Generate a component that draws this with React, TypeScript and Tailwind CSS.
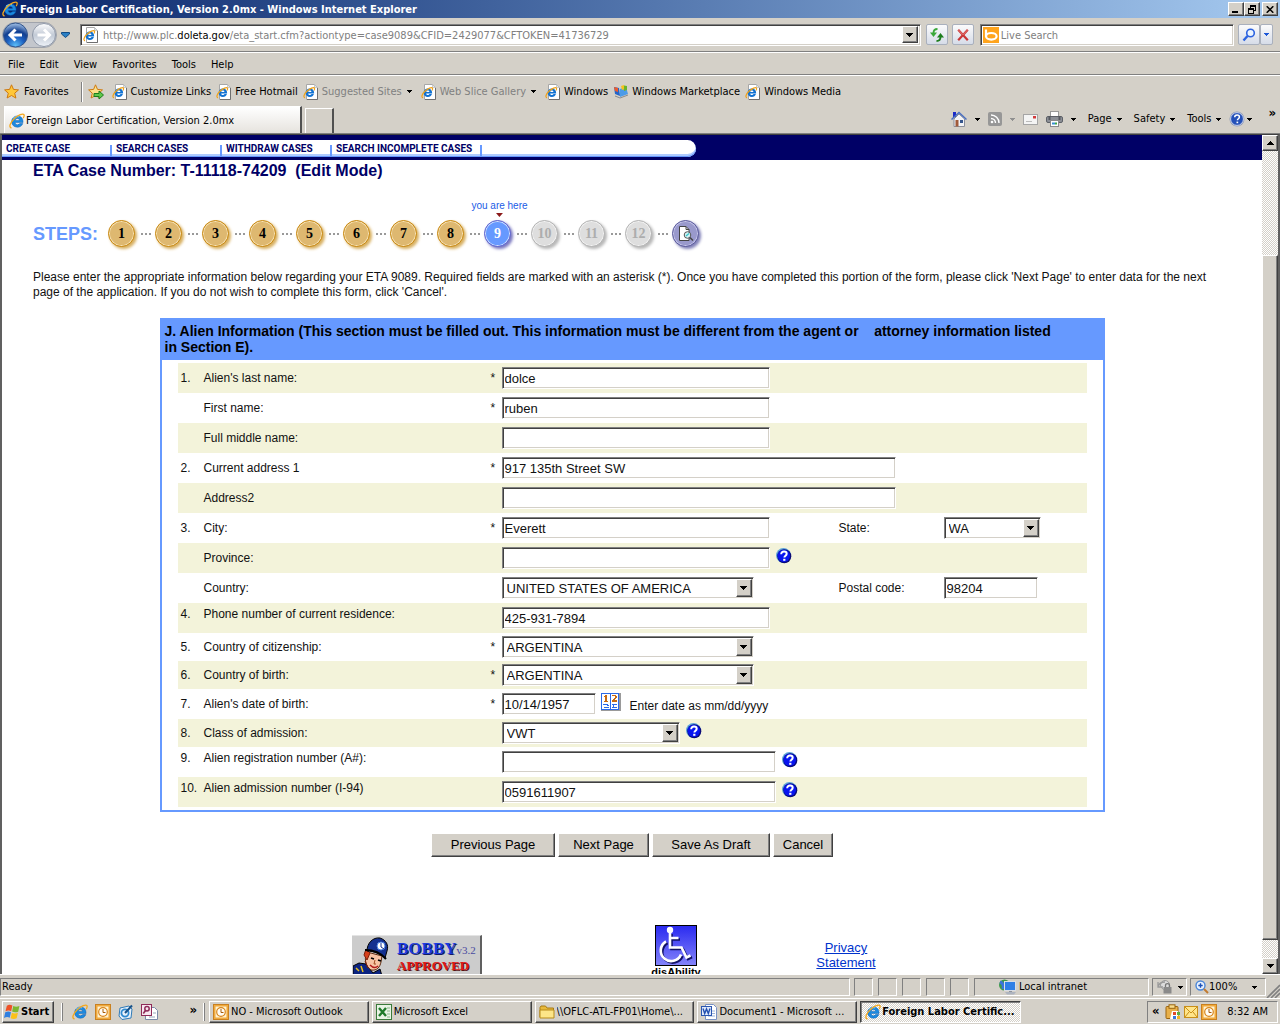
import React from "react";

const RAISED =
  "bg-[#d4d0c8] border border-t-white border-l-white border-b-[#404040] border-r-[#404040] shadow-[inset_-1px_-1px_#808080]";
const SUNKEN =
  "bg-white border border-t-[#808080] border-l-[#808080] border-b-white border-r-white shadow-[inset_1px_1px_#404040,inset_-1px_-1px_#d4d0c8]";
const PANEL = "border border-t-[#808080] border-l-[#808080] border-b-white border-r-white";
const DITHER = "bg-[repeating-conic-gradient(#ffffff_0_25%,#d4d0c8_0_50%)] bg-[length:2px_2px]";

function Arrow({ color = "#000", className = "" }: { color?: string; className?: string }) {
  return (
    <svg className={"shrink-0 " + className} width="7" height="4" viewBox="0 0 7 4" shapeRendering="crispEdges" aria-hidden="true">
      <path d="M0 0h7v1h-1v1h-1v1h-1v1h-1v-1h-1v-1h-1v-1h-1z" fill={color} />
    </svg>
  );
}

function SmallArrow({ color = "#000" }: { color?: string }) {
  return (
    <svg className="shrink-0" width="5" height="3" viewBox="0 0 5 3" shapeRendering="crispEdges" aria-hidden="true">
      <path d="M0 0h5v1h-1v1h-1v1h-1v-1h-1v-1h-1z" fill={color} />
    </svg>
  );
}

function ELogo({ size = 16 }: { size?: number }) {
  return (
    <svg className="shrink-0" width={size} height={size} viewBox="0 0 16 16" aria-hidden="true">
      <path d="M13.8 10.6C12.9 13 10.9 14.2 8.4 14.2 5 14.2 2.7 11.9 2.7 8.6S5 3 8.4 3c3.4 0 5.6 2.2 5.6 5.5v1.1H6.2c.1 1.4 1 2.2 2.3 2.2 1 0 1.7-.4 2.1-1.2zM6.3 7.4h4.2C10.4 6.2 9.6 5.500 8.400 5.500S6.500 6.200 6.300 7.400z" fill="#1b8ae0" stroke="#0c5fb4" strokeWidth=".5" />
      <path d="M4 5.200C5.500 3.800 8 3.300 10 3.900" stroke="#7fd0ff" strokeWidth="1" fill="none" />
      <path d="M2.600 14.800C-.6 14.600 1 9.800 5.200 5.800 9.300 1.900 14 .2 14.900 1.700c.5.800.1 2.200-.7 3.500" fill="none" stroke="#f5a81c" strokeWidth="1.300" />
    </svg>
  );
}

function PageIcon() {
  return (
    <svg className="shrink-0" width="16" height="16" viewBox="0 0 16 16" aria-hidden="true">
      <path d="M3.500 .5h8l3 3v12h-11z" fill="#fff" stroke="#a7a7a7" />
      <path d="M14.500 4v11.500H4" fill="none" stroke="#6f6f6f" />
      <path d="M11.500 .5v3h3z" fill="#dfe7ef" stroke="#b7b7b7" strokeWidth=".7" />
      <path d="M10.900 10.100c-.6 1.900-2 2.900-4 2.900-2.600 0-4.300-1.700-4.300-4.200S4.300 4.600 6.900 4.600c2.700 0 4.200 1.700 4.200 4.200v.6H5.200c.1 1 .8 1.700 1.800 1.700.7 0 1.200-.4 1.500-1zM5.300 7.900h3.100C8.300 7 7.700 6.500 6.900 6.500s-1.500.5-1.600 1.400z" fill="#1272d2" />
      <path d="M2 13.800C-.2 13.300 1.200 9.700 4.200 7 7 4.400 10.700 2.900 11.500 4.100c.4.600 0 1.600-.5 2.400" fill="none" stroke="#f0a21a" strokeWidth="1.200" />
    </svg>
  );
}

function Star({ add = false }: { add?: boolean }) {
  return (
    <svg className="shrink-0" width="16" height="16" viewBox="0 0 16 16" aria-hidden="true">
      <path d="M7.500.8l2 4.600 5 .5-3.800 3.300 1.200 4.900-4.400-2.600L3.100 14l1.200-4.800L.6 5.900l5-.5z" fill={add ? "#fbe08a" : "#ffc83a"} stroke="#cf7a10" />
      {add && <path d="M6 9.500h5V7l4.500 4-4.500 4v-2.500H6z" fill="#5fc84a" stroke="#1d7d1d" />}
    </svg>
  );
}

function OutlookIcon() {
  return (
    <svg className="shrink-0" width="16" height="16" viewBox="0 0 16 16" aria-hidden="true">
      <rect x=".5" y=".5" width="15" height="15" fill="#f3b23e" stroke="#c98020" />
      <rect x="2" y="2" width="12" height="12" fill="#fff3d1" stroke="#eda43c" />
      <circle cx="8" cy="8" r="4.300" fill="#fffdf6" stroke="#d98519" strokeWidth="1.200" />
      <path d="M8 5v3.500h2.500" fill="none" stroke="#a85c08" />
    </svg>
  );
}

function FlagIcon() {
  return (
    <svg className="shrink-0" width="16" height="16" viewBox="0 0 14 14" aria-hidden="true">
      <path d="M2.500 1.500c1.700-1.200 3.300-1 4.800-.1L6.300 6.300C4.800 5.500 3.200 5.500 1.300 6.400z" fill="#ee5126" />
      <path d="M8.100 1.800c1.700.9 3.300.9 5.400 0l-1.100 4.900c-1.800.9-3.500.8-5.300-.1z" fill="#7db72f" />
      <path d="M1.100 7.300c1.700-.9 3.300-1 5-.1l-1.100 4.900c-1.500-.9-3.100-.8-5 .1z" fill="#2f7fe0" />
      <path d="M6.900 7.600c1.700.9 3.400.9 5.300 0l-1.100 4.900c-1.800.9-3.500.9-5.300 0z" fill="#fbc11a" />
    </svg>
  );
}

function MarketIcon() {
  return (
    <svg className="shrink-0" width="16" height="16" viewBox="0 0 16 16" aria-hidden="true">
      <path d="M1 3l5 1 1 8-5-2z" fill="#2565c9" />
      <path d="M7 5l6-2 2 7-8 3z" fill="#4b9be8" />
      <path d="M1 3l4 1v4L2 7z" fill="#ef5a2a" />
      <path d="M8 2l3-1 1 4-3 1z" fill="#f6c21c" />
      <path d="M11 1.500l3 .5v4l-3 1z" fill="#6ab52e" />
      <path d="M2 12l5 2 8-3" stroke="#8a8a8a" fill="none" />
    </svg>
  );
}

function Help() {
  return (
    <button type="button" aria-label="Help" className="shrink-0 cursor-pointer">
      <svg width="16" height="16" viewBox="0 0 16 16" aria-hidden="true">
        <circle cx="7.500" cy="7.500" r="7.500" fill="#5ba3d9" />
        <circle cx="8.300" cy="8.300" r="7" fill="#0a0a78" />
        <circle cx="7.800" cy="7.900" r="6.200" fill="#0714f0" />
        <path d="M5.200 6.200c0-1.900 1.100-2.700 2.800-2.700s2.700.9 2.700 2.200c0 1.900-2.300 2-2.300 3.800" fill="none" stroke="#fff" strokeWidth="2" />
        <rect x="7.200" y="10.800" width="2.200" height="2" fill="#fff" />
      </svg>
    </button>
  );
}

function Ask() {
  return (
    <svg className="shrink-0" width="16" height="16" viewBox="0 0 16 16" aria-hidden="true">
      <circle cx="8" cy="8" r="7.500" fill="#8d99b8" />
      <circle cx="8" cy="8" r="6.400" fill="#2450b8" stroke="#dfe6f6" strokeWidth=".8" />
      <path d="M5.700 6.300c0-1.600 1-2.300 2.400-2.300s2.300.8 2.300 2c0 1.700-2 1.700-2 3.300" fill="none" stroke="#fff" strokeWidth="1.500" />
      <rect x="7.500" y="10.600" width="1.700" height="1.600" fill="#fff" />
    </svg>
  );
}

function TitleBar() {
  return (
    <header className="flex h-[18px] shrink-0 items-center bg-linear-to-r from-[#0a246a] to-[#a6caf0] pr-[2px] pl-[2px]">
      <ELogo />
      <h1 className="ml-[2px] flex-1 truncate pt-[1px] text-[11px] font-bold text-white">
        Foreign Labor Certification, Version 2.0mx - Windows Internet Explorer
      </h1>
      <button type="button" aria-label="Minimize" className={"flex h-[14px] w-4 items-end justify-start pb-[2px] pl-[3px] " + RAISED}>
        <span className="h-[2px] w-[6px] bg-black" />
      </button>
      <button type="button" aria-label="Restore" className={"flex h-[14px] w-4 items-center justify-center " + RAISED}>
        <svg width="8" height="9" viewBox="0 0 8 9" shapeRendering="crispEdges" aria-hidden="true">
          <path d="M2 0h6v2h-6zM2 2h1v1h-1zM7 2h1v4h-2v-1h1zM0 3h6v2h-6zM0 5h1v4h-1zM5 5h1v4h-1zM1 8h4v1h-4z" />
        </svg>
      </button>
      <button type="button" aria-label="Close" className={"ml-[2px] flex h-[14px] w-4 items-center justify-center " + RAISED}>
        <svg width="8" height="7" viewBox="0 0 8 7" aria-hidden="true">
          <path d="M.7.300l6.600 6.400M7.300.300L.7 6.700" stroke="#000" strokeWidth="1.600" />
        </svg>
      </button>
    </header>
  );
}

const TOOL_BTN = "flex h-[21px] items-center justify-center rounded-[2px] border border-[#a9b0bd] bg-linear-to-b from-[#fbfbfc] to-[#d6dce8]";

function AddressBar() {
  return (
    <div className="flex h-[34px] shrink-0 items-center border-b border-b-[#808080] pr-[7px] pl-[2px]">
      <svg className="shrink-0" width="56" height="28" viewBox="0 0 56 28" aria-hidden="true">
        <defs>
          <radialGradient id="back" cx=".5" cy=".95" r=".95">
            <stop offset="0" stopColor="#5cc0fa" />
            <stop offset=".4" stopColor="#1c5fc0" />
            <stop offset=".65" stopColor="#123f90" />
            <stop offset="1" stopColor="#a8c6ea" />
          </radialGradient>
          <linearGradient id="fwd" x1="0" y1="0" x2="0" y2="1">
            <stop offset="0" stopColor="#ffffff" />
            <stop offset=".5" stopColor="#c2cad6" />
            <stop offset="1" stopColor="#eef2f8" />
          </linearGradient>
        </defs>
        <rect x=".5" y="1.500" width="54" height="25" rx="12.500" fill="#c3c6cc" stroke="#a0a4ac" />
        <circle cx="13.500" cy="14" r="12" fill="url(#back)" stroke="#32558c" />
        <path d="M13.500 8.500L8 14l5.500 5.500M8.500 14H20" fill="none" stroke="#fff" strokeWidth="3" />
        <circle cx="42" cy="14" r="11.500" fill="url(#fwd)" stroke="#8f98a8" />
        <path d="M42 8.500l5.500 5.500-5.500 5.500M47 14H35.500" fill="none" stroke="#fff" strokeWidth="3" />
      </svg>
      <svg className="mr-[10px] ml-[3px] shrink-0" width="9" height="6" viewBox="0 0 9 6" aria-hidden="true">
        <path d="M.5.500h8v1.500l-4 3.500-4-3.500z" fill="#2a7fc4" stroke="#124c86" />
      </svg>
      <div className={"flex h-[22px] min-w-0 flex-1 items-center p-[2px] " + SUNKEN}>
        <PageIcon />
        <span className="ml-1 flex-1 truncate pt-[2px] text-[11px] text-[#808080]">
          http://www.plc.<span className="text-black">doleta.gov</span>/eta_start.cfm?actiontype=case9089&amp;CFID=2429077&amp;CFTOKEN=41736729
        </span>
        <button type="button" aria-label="Show addresses" className={"flex h-[17px] w-4 items-center justify-center " + RAISED}>
          <Arrow />
        </button>
      </div>
      <button type="button" aria-label="Refresh" className={"ml-[5px] w-[22px] shrink-0 " + TOOL_BTN}>
        <svg width="16" height="16" viewBox="0 0 16 16" aria-hidden="true">
          <path d="M8.500 2C5.500 2 4.500 3.500 4.500 6" fill="none" stroke="#3aa83a" strokeWidth="1.800" />
          <path d="M1 5.500h7L4.500 10z" fill="#3aa83a" />
          <path d="M7.500 14c3 0 4-1.500 4-4" fill="none" stroke="#1d7d1d" strokeWidth="1.800" />
          <path d="M8 10.500h7L11.500 6z" fill="#1d7d1d" />
        </svg>
      </button>
      <button type="button" aria-label="Stop" className={"ml-[4px] w-[22px] shrink-0 " + TOOL_BTN}>
        <svg width="12" height="12" viewBox="0 0 12 12" aria-hidden="true">
          <path d="M1.200.800l9.600 10.400M10.800.800L1.200 11.200" stroke="#c93636" strokeWidth="2.200" />
          <path d="M1.500 1l4.500 4.800L10.500 1" stroke="#ee8a86" strokeWidth=".8" fill="none" />
        </svg>
      </button>
      <div className={"ml-[6px] flex h-[22px] w-1/5 items-center p-[2px] " + SUNKEN}>
        <svg className="shrink-0" width="16" height="16" viewBox="0 0 16 16" aria-hidden="true">
          <rect width="16" height="16" fill="#ffa41c" />
          <path d="M3 2.500v7" stroke="#fff" strokeWidth="2.200" />
          <ellipse cx="8.300" cy="9.300" rx="5.300" ry="3.300" fill="none" stroke="#fff" strokeWidth="2.200" />
        </svg>
        <input aria-label="Live Search" placeholder="Live Search" className="ml-[2px] min-w-0 flex-1 bg-transparent pt-[2px] text-[11px] outline-none placeholder:text-[#808080]" />
      </div>
      <button type="button" aria-label="Search" className={"ml-[4px] w-[22px] shrink-0 " + TOOL_BTN}>
        <svg width="14" height="14" viewBox="0 0 14 14" aria-hidden="true">
          <circle cx="8.500" cy="5" r="3.800" fill="#eaf4ff" stroke="#2c63e0" strokeWidth="1.600" />
          <path d="M5.500 8L1.500 12.500" stroke="#2c63e0" strokeWidth="2.400" />
        </svg>
      </button>
      <button type="button" aria-label="Search options" className={"w-[13px] shrink-0 " + TOOL_BTN}>
        <SmallArrow color="#1c57d8" />
      </button>
    </div>
  );
}

function MenuBar() {
  return (
    <nav aria-label="Menu" className="flex h-[23px] shrink-0 items-center gap-[15px] border-t border-b border-t-white border-b-[#808080] px-2 pt-[2px] text-[11px]">
      {["File", "Edit", "View", "Favorites", "Tools", "Help"].map((m) => (
        <button key={m} type="button">{m}</button>
      ))}
    </nav>
  );
}

function FavLink({ label, icon = "page", muted = false }: { label: string; icon?: string; muted?: boolean }) {
  return (
    <a href="#" className={"flex shrink-0 items-center gap-[3px] " + (muted ? "text-[#808080]" : "text-black")}>
      {icon === "page" ? <PageIcon /> : <MarketIcon />}
      <span>{label}</span>
      {muted && <span className="pr-1 pl-[2px]"><SmallArrow /></span>}
    </a>
  );
}

function FavoritesBar() {
  return (
    <div className="flex h-[30px] shrink-0 items-center border-t border-t-white pt-[2px] pl-1 text-[11px]">
      <button type="button" className="flex items-center gap-1"><Star />Favorites</button>
      <span className="mr-[5px] ml-3 h-[20px] w-[2px] border-l border-l-[#808080] bg-white" />
      <button type="button" aria-label="Add to favorites bar"><Star add /></button>
      <div className="ml-2 flex gap-[5px]">
        <FavLink label="Customize Links" />
        <FavLink label="Free Hotmail" />
        <FavLink label="Suggested Sites" muted />
        <FavLink label="Web Slice Gallery" muted />
        <FavLink label="Windows" />
        <FavLink label="Windows Marketplace" icon="market" />
        <FavLink label="Windows Media" />
      </div>
    </div>
  );
}

function TabRow() {
  return (
    <div className="flex h-[29px] shrink-0 items-start border-b border-b-[#808080] pl-1 text-[11px]">
      <div className="mt-[1px] flex h-[27px] w-[298px] items-center border-t border-r-2 border-l border-t-white border-r-[#505050] border-l-white bg-linear-to-b from-white to-[#e6e3de] pt-[2px] pl-1">
        <ELogo />
        <span className="ml-[1px]">Foreign Labor Certification, Version 2.0mx</span>
      </div>
      <button type="button" aria-label="New tab" className="mt-[3px] ml-[3px] h-[25px] w-[29px] border-t border-r-2 border-l border-t-white border-r-[#505050] border-l-white" />
      <div className="ml-auto flex h-[28px] items-center pr-1">
        <svg width="16" height="16" viewBox="0 0 16 16" aria-hidden="true">
          <path d="M2 1h3v5H2z" fill="#1a2ac8" />
          <path d="M3 8v7.500h10.500V8L8 3z" fill="#f3f3f6" stroke="#8a8f9b" />
          <path d="M.5 8.500L8 1.500l7.500 7" fill="none" stroke="#4a6fc0" strokeWidth="1.500" />
          <rect x="4.500" y="9" width="3" height="6.500" fill="#a05a3a" />
          <rect x="9" y="9" width="3" height="3" fill="#35558c" />
        </svg>
        <span className="ml-2 flex"><SmallArrow /></span>
        <svg className="ml-2" width="14" height="14" viewBox="0 0 14 14" aria-hidden="true">
          <rect width="14" height="14" rx="2" fill="#979797" />
          <circle cx="4" cy="10" r="1.300" fill="#fff" />
          <path d="M3 6.500A4.500 4.500 0 017.500 11M3 3a8 8 0 018 8" fill="none" stroke="#fff" strokeWidth="1.400" />
        </svg>
        <span className="ml-2 flex"><SmallArrow color="#909090" /></span>
        <svg className="ml-2" width="15" height="11" viewBox="0 0 15 11" aria-hidden="true">
          <rect x=".5" y=".5" width="14" height="10" fill="#f4f4f4" stroke="#a5a5a5" />
          <rect x="10" y="2" width="3" height="2.500" fill="#d23a3a" />
          <path d="M3 7.500h6" stroke="#bbb" />
        </svg>
        <svg className="ml-2" width="17" height="16" viewBox="0 0 17 16" aria-hidden="true">
          <rect x="4.500" y=".5" width="8" height="6" fill="#fff" stroke="#999" />
          <rect x=".5" y="5.500" width="16" height="6" rx="1.500" fill="#8c8f96" stroke="#5e6168" />
          <rect x="2.500" y="5" width="2" height="4" fill="#55585f" />
          <rect x="12.500" y="5" width="2" height="4" fill="#55585f" />
          <rect x="4.500" y="9.500" width="8" height="6" fill="#fff" stroke="#8a8a8a" />
          <path d="M6 12.500h3" stroke="#3a8fd0" strokeWidth="2" />
          <path d="M9 12.500h2" stroke="#3aa84a" strokeWidth="2" />
        </svg>
        <span className="ml-2 flex"><SmallArrow /></span>
        <div className="ml-3 flex gap-3">
          {["Page", "Safety", "Tools"].map((t) => (
            <button key={t} type="button" className="flex items-center gap-[5px]">{t}<SmallArrow /></button>
          ))}
        </div>
        <button type="button" aria-label="Help" className="ml-2 flex items-center gap-[2px]"><Ask /><SmallArrow /></button>
        <button type="button" aria-label="More" className="mb-3 ml-4 text-[13px] font-bold">»</button>
      </div>
    </div>
  );
}

function SiteNav() {
  const items = [
    { label: "CREATE CASE", w: "w-[110px]" },
    { label: "SEARCH CASES", w: "w-[110px]" },
    { label: "WITHDRAW CASES", w: "w-[110px]" },
    { label: "SEARCH INCOMPLETE CASES", w: "w-[150px]" },
  ];
  return (
    <nav aria-label="Cases" className="h-[25px] bg-[#000066] pt-[5px]">
      <div className="flex h-[17px] w-[694px] items-end overflow-hidden rounded-r-full bg-white font-['Roboto','Liberation_Sans',sans-serif] text-[10px] font-bold whitespace-nowrap shadow-[inset_0_-1px_#6699ff,inset_0_-3px_#b0ccff]">
        {items.map((i) => (
          <a key={i.label} href="#" className={"flex h-3 items-center border-r-2 border-r-[#6699ff] pb-[5px] pl-1 leading-3 text-[#000066] " + i.w}>
            {i.label}
          </a>
        ))}
      </div>
    </nav>
  );
}

const CIRCLE = "relative flex size-[27px] items-center justify-center rounded-full border font-['Liberation_Serif',serif] text-[14px] font-bold";

function Steps() {
  const numbers = [1, 2, 3, 4, 5, 6, 7, 8, 9, 10, 11, 12];
  return (
    <div className="mt-[39px] flex items-center">
      <span className="w-[75px] text-[18px] leading-6 font-bold text-[#6699ff]">STEPS:</span>
      {numbers.map((n) => (
        <React.Fragment key={n}>
          <button
            type="button"
            className={
              CIRCLE +
              (n < 9
                ? " border-[#c98a14] bg-[#deb870] text-black shadow-[inset_0_0_0_1px_#f6e2b6,2px_2px_3px_#d8b060]"
                : n === 9
                  ? " border-[#6666cc] bg-[#6699ff] text-white shadow-[inset_0_0_0_1px_#cfe0ff,2px_2px_3px_#7a78c0]"
                  : " border-[#b4b4b4] bg-[#dedede] text-[#adadad] shadow-[inset_0_0_0_1px_#f2f2f2,2px_2px_3px_#b8b8b8]")
            }
          >
            {n}
            {n === 9 && (
              <span className="absolute bottom-[29px] left-1/2 ml-[2px] flex -translate-x-1/2 flex-col items-center font-['Liberation_Sans',sans-serif] text-[10px] leading-3 font-normal whitespace-nowrap text-[#1a5ce6]">
                you are here
                <svg className="mt-[1px]" width="7" height="4" viewBox="0 0 7 4" aria-hidden="true">
                  <path d="M0 0h7L3.500 4z" fill="#8b1a1a" />
                </svg>
              </span>
            )}
          </button>
          <span className="ml-[1px] flex w-[19px] justify-center gap-[2px]">
            <i className="size-[2px] bg-[#999999]" />
            <i className="size-[2px] bg-[#999999]" />
            <i className="size-[2px] bg-[#999999]" />
          </span>
        </React.Fragment>
      ))}
      <button type="button" aria-label="Review" className={CIRCLE + " border-[#5c5c9c] bg-[#9999cc] shadow-[inset_0_0_0_1px_#c6c6ea,2px_2px_3px_#8080b8]"}>
        <svg width="17" height="17" viewBox="0 0 17 17" aria-hidden="true">
          <path d="M2.500 1.500h6.500l3 3v11h-9.500z" fill="#fff" stroke="#444" />
          <path d="M9 1.500v3h3" fill="none" stroke="#444" />
          <circle cx="10.500" cy="10" r="3.300" fill="#d5f2f4" stroke="#555" />
          <path d="M9 11l3-2.500" stroke="#35c8cc" strokeWidth="1.300" />
          <path d="M13 12.500l3 3" stroke="#444" strokeWidth="1.500" />
        </svg>
      </button>
    </div>
  );
}

function TextField({ id, w, value = "" }: { id: string; w: string; value?: string }) {
  return <input id={id} type="text" defaultValue={value} className={"h-[22px] px-[2px] text-[13px] outline-none " + SUNKEN + " " + w} />;
}

function SelectField({ id, w, value }: { id: string; w: string; value: string }) {
  return (
    <span className={"relative inline-flex h-[22px] " + w}>
      <select id={id} defaultValue={value} className={"h-full w-full appearance-none rounded-none pt-[1px] pl-1 text-[13px] outline-none " + SUNKEN}>
        <option>{value}</option>
      </select>
      <span className={"pointer-events-none absolute top-[2px] right-[2px] bottom-[2px] flex w-4 items-center justify-center " + RAISED}>
        <Arrow />
      </span>
    </span>
  );
}

type RowProps = {
  id: string;
  num?: string;
  label: string;
  required?: boolean;
  shade?: boolean;
  short?: boolean;
  high?: boolean;
  children: React.ReactNode;
};

function Row({ id, num = "", label, required, shade, short, high, children }: RowProps) {
  return (
    <div className={"flex items-center " + (short ? "h-7 " : "h-[30px] ") + (shade ? "bg-[#f3f3da]" : "bg-white")}>
      <span className={"w-[26px] shrink-0 pl-[3px] " + (high ? "mb-2" : "")}>{num}</span>
      <label htmlFor={id} className={"w-[287px] shrink-0 " + (high ? "mb-2" : "")}>{label}</label>
      <span className="w-[11px] shrink-0">{required ? "*" : ""}</span>
      {children}
    </div>
  );
}

function AlienForm() {
  return (
    <section className="mx-auto w-3/4 border-2 border-[#6699ff] pb-[3px] text-[12px] text-[#111]">
      <h2 className="bg-[#6699ff] px-[3px] pt-[3px] pb-[5px] text-[14px] leading-4 font-bold text-black">
        J. Alien Information (This section must be filled out. This information must be different from the agent or &nbsp;&nbsp; attorney information listed
        <br />
        in Section E).
      </h2>
      <div className="mx-4 mt-[3px]">
        <Row id="last" num="1." label="Alien's last name:" required shade><TextField id="last" w="w-[268px]" value="dolce" /></Row>
        <Row id="first" label="First name:" required><TextField id="first" w="w-[268px]" value="ruben" /></Row>
        <Row id="middle" label="Full middle name:" shade><TextField id="middle" w="w-[268px]" /></Row>
        <Row id="addr1" num="2." label="Current address 1" required><TextField id="addr1" w="w-[394px]" value="917 135th Street SW" /></Row>
        <Row id="addr2" label="Address2" shade><TextField id="addr2" w="w-[394px]" /></Row>
        <Row id="city" num="3." label="City:" required>
          <span className="flex w-[337px]"><TextField id="city" w="w-[268px]" value="Everett" /></span>
          <label htmlFor="state" className="w-[105px]">State:</label>
          <SelectField id="state" w="w-[97px]" value="WA" />
        </Row>
        <Row id="province" label="Province:" shade>
          <TextField id="province" w="w-[268px]" />
          <span className="mb-1 ml-[6px] flex"><Help /></span>
        </Row>
        <Row id="country" label="Country:">
          <span className="flex w-[337px]"><SelectField id="country" w="w-[252px]" value="UNITED STATES OF AMERICA" /></span>
          <label htmlFor="postal" className="w-[105px]">Postal code:</label>
          <TextField id="postal" w="w-[94px]" value="98204" />
        </Row>
        <Row id="phone" num="4." label="Phone number of current residence:" shade high><TextField id="phone" w="w-[268px]" value="425-931-7894" /></Row>
        <Row id="citizen" num="5." label="Country of citizenship:" required short><SelectField id="citizen" w="w-[252px]" value="ARGENTINA" /></Row>
        <Row id="birth" num="6." label="Country of birth:" required short shade><SelectField id="birth" w="w-[252px]" value="ARGENTINA" /></Row>
        <Row id="dob" num="7." label="Alien's date of birth:" required>
          <TextField id="dob" w="w-[94px]" value="10/14/1957" />
          <button type="button" aria-label="Pick a date" className="mb-1 ml-[5px]">
            <svg width="20" height="18" viewBox="0 0 20 18" shapeRendering="crispEdges" aria-hidden="true">
              <rect width="20" height="18" fill="#9a9a9a" />
              <rect width="18" height="17" fill="#2c6ae8" />
              <rect x="1" y="1" width="8" height="15" fill="#fff" />
              <rect x="10" y="1" width="7" height="15" fill="#fff" />
              <path d="M4 2h2v6h-2zM3 3h1v1h-1zM3 8h4v1h-4zM11 2h4v1h-4zM14 3h2v2h-2zM13 5h2v1h-2zM12 6h2v1h-2zM11 7h5v2h-5z" fill="#c86a10" />
              <path d="M2 11h5v1h-5zM3 14h5v1h-5zM11 11h5v1h-5zM11 14h5v1h-5zM6 12h2v1h-2zM12 12h1v2h-1z" fill="#2c6ae8" />
            </svg>
          </button>
          <span className="mt-1 ml-[9px]">Enter date as mm/dd/yyyy</span>
        </Row>
        <Row id="class" num="8." label="Class of admission:" short shade>
          <SelectField id="class" w="w-[178px]" value="VWT" />
          <span className="mb-1 ml-[6px] flex"><Help /></span>
        </Row>
        <Row id="areg" num="9." label="Alien registration number (A#):" high>
          <TextField id="areg" w="w-[274px]" />
          <span className="mb-1 ml-[6px] flex"><Help /></span>
        </Row>
        <Row id="i94" num="10." label="Alien admission number (I-94)" shade high>
          <TextField id="i94" w="w-[274px]" value="0591611907" />
          <span className="mb-1 ml-[6px] flex"><Help /></span>
        </Row>
      </div>
    </section>
  );
}

function Bobby() {
  return (
    <a href="#" aria-label="Bobby Approved v3.2" className="flex h-[42px] w-[130px] shrink-0 border-t border-r-2 border-t-[#e4e4e4] border-r-[#606060] bg-[#cccccc]">
      <svg className="ml-[1px] shrink-0" width="40" height="40" viewBox="0 0 40 40" aria-hidden="true">
        <path d="M0 40v-10l6-3 7 1 7 9 7-4 2 7z" fill="#0c2480" stroke="#000" />
        <path d="M3 32l3 3M8 30l2 6" stroke="#e8c020" strokeWidth="1.500" />
        <path d="M14 16c-3 5-2 14 4 18 6 1 9-3 10-8l1-6z" fill="#f7c3a4" stroke="#5a2a10" />
        <path d="M13 13l-2 6 3 5 3-7zM12 25l3 7" fill="#d8401c" stroke="#7d1c08" />
        <path d="M14 15c0-8 6-14 13-13 6 2 9 7 7 13l-2 7c-5-4-11-7-18-7z" fill="#14308f" stroke="#000" />
        <path d="M12 14c8 0 16 3 21 9" stroke="#000" strokeWidth="2" fill="none" />
        <circle cx="28" cy="10" r="4" fill="#fff" stroke="#4a80e0" />
        <path d="M28 7v4l3 2" stroke="#14308f" fill="none" />
        <path d="M18 22l3 1M25 24l3 1" stroke="#000" strokeWidth="1.600" />
        <path d="M17 29c3 3 6 3 8 1" stroke="#b01818" fill="none" strokeWidth="1.500" />
        <path d="M22 24l-1 4h2" stroke="#a04a20" fill="none" />
      </svg>
      <span className="ml-1 flex flex-col pt-1 font-['Liberation_Serif',serif] font-bold whitespace-nowrap">
        <span className="text-[17px] leading-[18px] text-[#1a3ae0] [text-shadow:1px_1px_#111a60]">
          BOBBY<span className="text-[11px] font-normal text-[#4a4aa0] [text-shadow:none]">v3.2</span>
        </span>
        <span className="text-[13px] leading-[14px] text-[#e01818] [text-shadow:1px_1px_#5a1010]">APPROVED</span>
      </span>
    </a>
  );
}

function Footer() {
  return (
    <footer className="mx-auto mt-[68px] flex w-[560px] items-start pr-8">
      <div className="mt-[10px]"><Bobby /></div>
      <a href="#" className="ml-[166px] flex w-[56px] flex-col items-center text-black">
        <svg width="42" height="41" viewBox="0 0 42 41" aria-hidden="true">
          <defs>
            <linearGradient id="dis" x1="0" y1="0" x2="0" y2="1">
              <stop offset="0" stopColor="#2a2af0" />
              <stop offset="1" stopColor="#8484fa" />
            </linearGradient>
          </defs>
          <rect x=".5" y=".5" width="41" height="40" fill="url(#dis)" stroke="#000" />
          <g transform="translate(1 1)" fill="none" stroke="#111166" strokeWidth="2.600">
            <path d="M15.500 8v15H27l5 10 4-2M16 13.500h8M11.500 17A10.500 10.500 0 1 0 26.500 30" />
          </g>
          <circle cx="15" cy="5" r="3.200" fill="#fff" />
          <path d="M15 7v15.500H26.500l5 10 4-2M15.500 13h8M11 16.500A10.500 10.500 0 1 0 26 29.500" fill="none" stroke="#fff" strokeWidth="2.600" />
        </svg>
        <span className="text-[11px] leading-3 font-bold">disAbility</span>
      </a>
      <a href="#" className="mt-[15px] ml-auto w-[68px] text-center text-[13px] leading-[15px] text-[#0033cc] underline">Privacy Statement</a>
    </footer>
  );
}

function PageBody() {
  return (
    <main className="min-w-0 flex-1 overflow-hidden bg-white font-['Liberation_Sans',Arial,sans-serif]">
      <SiteNav />
      <div className="pr-[31px] pl-[31px]">
        <h2 className="pt-[1px] text-[16px] leading-5 font-bold text-[#000066]">ETA Case Number: T-11118-74209 &nbsp;(Edit Mode)</h2>
        <Steps />
        <p className="mt-[23px] mb-[18px] text-[12px] leading-[15px] text-[#111]">
          Please enter the appropriate information below regarding your ETA 9089. Required fields are marked with an asterisk (*). Once you have completed this portion of the form, please click 'Next Page' to enter data for the next page of the application. If you do not wish to complete this form, click 'Cancel'.
        </p>
      </div>
      <AlienForm />
      <div className="mt-[21px] flex justify-center gap-[3px] text-[13px]">
        <button type="button" className={"h-6 w-[124px] " + RAISED}>Previous Page</button>
        <button type="button" className={"h-6 w-[91px] " + RAISED}>Next Page</button>
        <button type="button" className={"h-6 w-[118px] " + RAISED}>Save As Draft</button>
        <button type="button" className={"h-6 w-[60px] " + RAISED}>Cancel</button>
      </div>
      <Footer />
    </main>
  );
}

function ScrollBar() {
  return (
    <div className={"flex w-4 shrink-0 flex-col " + DITHER}>
      <button type="button" aria-label="Scroll up" className={"flex h-4 items-center justify-center " + RAISED}>
        <Arrow className="rotate-180" />
      </button>
      <div className="grow-[104]" />
      <div className={"grow-[686] " + RAISED} />
      <div className="grow-[18]" />
      <button type="button" aria-label="Scroll down" className={"flex h-4 items-center justify-center " + RAISED}>
        <Arrow />
      </button>
    </div>
  );
}

function StatusBar() {
  return (
    <div className="flex h-6 shrink-0 items-center gap-[3px] border-t border-t-white pt-[1px] text-[11px]">
      <div className={"flex h-[18px] flex-1 items-center pl-[1px] " + PANEL}>Ready</div>
      <div className="flex gap-[5px] pl-[1px]">
        {[1, 2, 3, 4, 5].map((n) => (
          <div key={n} className={"h-[18px] w-[19px] " + PANEL} />
        ))}
      </div>
      <div className={"ml-[2px] flex h-[18px] w-[175px] items-center pl-6 " + PANEL}>
        <svg className="shrink-0" width="18" height="16" viewBox="0 0 18 16" aria-hidden="true">
          <circle cx="5.500" cy="6" r="5.500" fill="#3d9a48" />
          <path d="M1 3c3 1 4 3 3 7" stroke="#3a74d8" strokeWidth="3" fill="none" />
          <rect x="5.500" y="2.500" width="11" height="9" fill="#2f7fe6" stroke="#d8dde6" />
          <path d="M6 13h11l-2 2.500H8z" fill="#aeb4bf" />
          <rect x="10" y="12" width="3" height="1" fill="#8d939e" />
        </svg>
        <span className="ml-[2px]">Local intranet</span>
      </div>
      <button type="button" aria-label="Protected mode" className={"flex h-[18px] w-[35px] items-center gap-[5px] pl-1 " + PANEL}>
        <svg width="16" height="14" viewBox="0 0 16 14" aria-hidden="true">
          <circle cx="8" cy="5" r="4.500" fill="#dcdcdc" stroke="#9a9a9a" />
          <path d="M1 2v5h5M1 7c1-4 4-5 7-5" stroke="#9a9a9a" strokeWidth="1.300" fill="none" />
          <rect x="6.500" y="7" width="8" height="6.500" fill="#8a8a8a" />
          <path d="M8.500 7V5.500c0-2.400 4-2.400 4 0V7" stroke="#777" fill="none" strokeWidth="1.300" />
        </svg>
        <SmallArrow />
      </button>
      <button type="button" className={"flex h-[18px] w-[76px] items-center pl-1 " + PANEL}>
        <svg width="14" height="14" viewBox="0 0 14 14" aria-hidden="true">
          <circle cx="5.500" cy="5.500" r="4.500" fill="#eaf3ff" stroke="#4a86d8" strokeWidth="1.400" />
          <path d="M3.300 5.500h4.400M5.500 3.300v4.400" stroke="#1a50b8" strokeWidth="1.400" />
          <path d="M9 9l4 4" stroke="#c07a30" strokeWidth="2" />
        </svg>
        <span>100%</span>
        <span className="mr-2 ml-auto flex"><SmallArrow /></span>
      </button>
      <svg className="mt-auto -ml-[3px] shrink-0" width="14" height="14" viewBox="0 0 14 14" aria-hidden="true">
        <path d="M1 14L14 1M5 14l9-9M9 14l5-5" stroke="#808080" strokeWidth="1.600" />
      </svg>
    </div>
  );
}

function TaskButton({ icon, label }: { icon: React.ReactNode; label: string }) {
  return (
    <button type="button" className={"flex h-[22px] min-w-0 flex-1 items-center gap-[2px] pl-[3px] text-[11px] " + RAISED}>
      {icon}
      <span className="truncate">{label}</span>
    </button>
  );
}

function TaskBar() {
  return (
    <div className="flex h-[26px] shrink-0 items-center border-t border-t-white px-[2px]">
      <button type="button" className={"flex h-[22px] w-[52px] shrink-0 items-center gap-[1px] pl-[1px] text-[11px] font-bold " + RAISED}>
        <FlagIcon />Start
      </button>
      <span className="mr-[7px] ml-[7px] h-[18px] w-[2px] shrink-0 border-r border-r-[#808080] bg-white" />
      <div className="flex w-[127px] shrink-0 items-center gap-[7px] pl-[2px]">
        <ELogo />
        <OutlookIcon />
        <svg width="16" height="16" viewBox="0 0 16 16" aria-hidden="true">
          <path d="M2 4l9-2 3 3-1 9-9 1.500L1 12z" fill="#e9f2fb" stroke="#2f7ab8" />
          <circle cx="7" cy="9" r="3.600" fill="none" stroke="#2f8ad0" strokeWidth="1.800" />
          <path d="M7 9l7-7.500" stroke="#17528a" strokeWidth="2" />
        </svg>
        <svg width="17" height="16" viewBox="0 0 17 16" aria-hidden="true">
          <path d="M4.500 3.500h9l3 3v9h-12z" fill="#fff" stroke="#7a8aa8" />
          <rect x=".5" y=".5" width="10" height="11" fill="#f6e6ee" stroke="#8f2a58" />
          <circle cx="6" cy="4.800" r="2.200" fill="none" stroke="#8f2a58" strokeWidth="1.500" />
          <path d="M4.500 6.500L2.300 9.500" stroke="#8f2a58" strokeWidth="1.600" />
          <path d="M8 13h6M12 9h3" stroke="#9ab" />
        </svg>
        <span className="mb-1 ml-auto text-[13px] font-bold">»</span>
      </div>
      <span className="mr-1 ml-[6px] h-[18px] w-[2px] shrink-0 border-r border-r-[#808080] bg-white" />
      <div className="flex min-w-0 flex-1 gap-[3px]">
        <TaskButton icon={<OutlookIcon />} label="NO - Microsoft Outlook" />
        <TaskButton
          label="Microsoft Excel"
          icon={
            <svg className="shrink-0" width="16" height="16" viewBox="0 0 16 16" aria-hidden="true">
              <rect x=".5" y=".5" width="15" height="15" fill="#e8f3e4" stroke="#3a7a3a" />
              <path d="M11 4h3M11 7h3M11 10h3M11 13h3" stroke="#8ab88a" />
              <path d="M3 4l7 8M10 4l-7 8" stroke="#1f7a2a" strokeWidth="2.400" />
            </svg>
          }
        />
        <TaskButton
          label="\\OFLC-ATL-FP01\Home\..."
          icon={
            <svg className="shrink-0" width="16" height="16" viewBox="0 0 16 16" aria-hidden="true">
              <path d="M1 13V3.500l1-1.500h4.500L8 4h6.500v9z" fill="#e8b93a" stroke="#a87a10" />
              <path d="M1 14V6h14v8z" fill="#fde588" stroke="#b88a18" />
            </svg>
          }
        />
        <TaskButton
          label="Document1 - Microsoft ..."
          icon={
            <svg className="shrink-0" width="16" height="16" viewBox="0 0 16 16" aria-hidden="true">
              <path d="M4.500 .5h8l3 3v12h-11z" fill="#fff" stroke="#7a93c4" />
              <path d="M9 7h5M9 9.500h5M7 12h7" stroke="#9ab2dc" />
              <rect x=".5" y="2.500" width="10" height="9" fill="#dfe9fa" stroke="#2a56b0" />
              <path d="M2 4.500L3.700 9.500 5.500 5l1.800 4.500L9 4.500" fill="none" stroke="#2450b0" strokeWidth="1.400" />
            </svg>
          }
        />
        <button
          type="button"
          className={"flex h-[22px] min-w-0 flex-1 items-center gap-[1px] border border-t-[#404040] border-r-white border-b-white border-l-[#404040] pl-1 text-[11px] font-bold shadow-[inset_1px_1px_#808080] " + DITHER}
        >
          <ELogo />
          <span className="truncate">Foreign Labor Certific...</span>
        </button>
      </div>
      <div className={"ml-[126px] flex h-[22px] w-[131px] shrink-0 items-center pl-1 text-[11px] " + PANEL}>
        <span className="mb-[2px] text-[13px] font-bold">«</span>
        <svg className="ml-[5px]" width="16" height="16" viewBox="0 0 16 16" aria-hidden="true">
          <rect x="1" y="2.500" width="12" height="12" rx="1" fill="#e8b04a" stroke="#9a6410" />
          <rect x="4" y=".8" width="6" height="3.500" fill="#f7dc8e" stroke="#9a6410" />
          <path d="M7 7h6v8H5z" fill="#fff" />
          <rect x="8" y="8" width="3" height="3" fill="#e04a2a" />
          <rect x="12" y="8" width="3" height="3" fill="#5ab040" />
          <rect x="8" y="12" width="3" height="3" fill="#3a78d8" />
          <rect x="12" y="12" width="3" height="3" fill="#f0b820" />
        </svg>
        <svg className="ml-[3px]" width="14" height="12" viewBox="0 0 14 12" aria-hidden="true">
          <rect x=".5" y=".5" width="13" height="11" fill="#ffe58a" stroke="#c98f18" />
          <path d="M1 1l6 6 6-6M1 11l4-5M13 11L9 6" fill="none" stroke="#c98f18" />
        </svg>
        <span className="ml-[3px]"><OutlookIcon /></span>
        <span className="mr-[9px] ml-auto whitespace-nowrap">8:32 AM</span>
      </div>
    </div>
  );
}

export default function App() {
  return (
    <div className="flex h-screen flex-col overflow-hidden bg-[#d4d0c8] font-['DejaVu_Sans_Condensed','Noto_Sans',sans-serif] text-[11px] leading-4 text-black">
      <TitleBar />
      <AddressBar />
      <MenuBar />
      <FavoritesBar />
      <TabRow />
      <div className="flex min-h-0 flex-1 border-t border-r-2 border-l-2 border-t-[#404040] border-r-[#606060] border-l-[#606060]">
        <PageBody />
        <ScrollBar />
      </div>
      <StatusBar />
      <TaskBar />
    </div>
  );
}
